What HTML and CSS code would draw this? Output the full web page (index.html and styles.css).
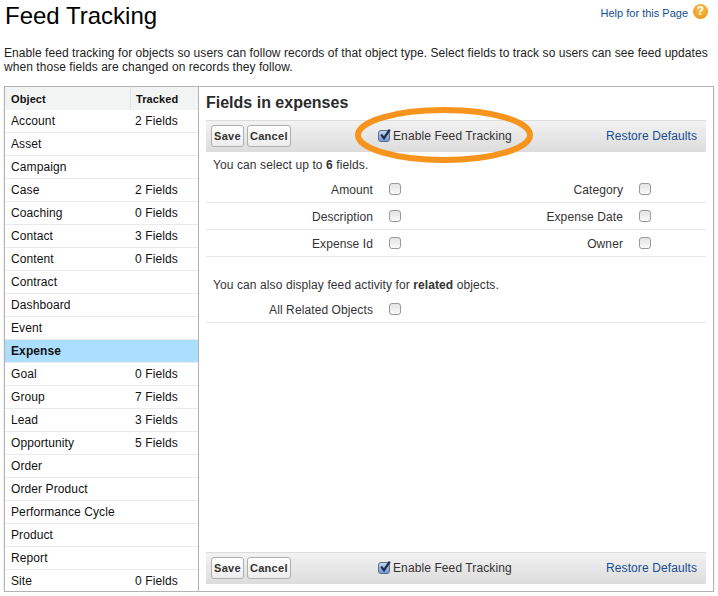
FILE: index.html
```html
<!DOCTYPE html>
<html lang="en">
<head>
    <meta charset="UTF-8">
    <title>Feed Tracking</title>
    <link rel="stylesheet" href="styles.css">
</head>
<body>
    <header class="page-head">
        <h1>Feed Tracking</h1>
        <div class="help">
            <a href="#">Help for this Page</a>
            <span class="help-icon">?</span>
        </div>
    </header>

    <p class="intro">Enable feed tracking for objects so users can follow records of that object type. Select fields to track so users can see feed updates when those fields are changed on records they follow.</p>

    <div class="setup">
        <div class="objects">
            <div class="row head"><span class="name">Object</span><span class="tracked">Tracked</span></div>
            <div class="row"><span class="name">Account</span><span class="tracked">2 Fields</span></div>
            <div class="row"><span class="name">Asset</span></div>
            <div class="row"><span class="name">Campaign</span></div>
            <div class="row"><span class="name">Case</span><span class="tracked">2 Fields</span></div>
            <div class="row"><span class="name">Coaching</span><span class="tracked">0 Fields</span></div>
            <div class="row"><span class="name">Contact</span><span class="tracked">3 Fields</span></div>
            <div class="row"><span class="name">Content</span><span class="tracked">0 Fields</span></div>
            <div class="row"><span class="name">Contract</span></div>
            <div class="row"><span class="name">Dashboard</span></div>
            <div class="row"><span class="name">Event</span></div>
            <div class="row selected"><span class="name">Expense</span></div>
            <div class="row"><span class="name">Goal</span><span class="tracked">0 Fields</span></div>
            <div class="row"><span class="name">Group</span><span class="tracked">7 Fields</span></div>
            <div class="row"><span class="name">Lead</span><span class="tracked">3 Fields</span></div>
            <div class="row"><span class="name">Opportunity</span><span class="tracked">5 Fields</span></div>
            <div class="row"><span class="name">Order</span></div>
            <div class="row"><span class="name">Order Product</span></div>
            <div class="row"><span class="name">Performance Cycle</span></div>
            <div class="row"><span class="name">Product</span></div>
            <div class="row"><span class="name">Report</span></div>
            <div class="row last"><span class="name">Site</span><span class="tracked">0 Fields</span></div>
        </div>

        <div class="panel">
            <h2>Fields in expenses</h2>

            <div class="toolbar">
                <div class="buttons"><button>Save</button><button>Cancel</button></div>
                <label class="enable">
                    <span class="box checked"><svg viewBox="0 0 14 14" width="14" height="14"><path d="M3.2 6.6 L6 10.2 L11.8 1.6" fill="none" stroke="#1c2a44" stroke-width="2.2"/></svg></span>
                    Enable Feed Tracking
                </label>
                <a class="restore" href="#">Restore Defaults</a>
            </div>

            <p class="note">You can select up to <b>6</b> fields.</p>
            <div class="fields">
                <div class="field"><span class="label">Amount</span><span class="box"></span></div>
                <div class="field"><span class="label">Category</span><span class="box"></span></div>
                <div class="field"><span class="label">Description</span><span class="box"></span></div>
                <div class="field"><span class="label">Expense Date</span><span class="box"></span></div>
                <div class="field"><span class="label">Expense Id</span><span class="box"></span></div>
                <div class="field"><span class="label">Owner</span><span class="box"></span></div>
            </div>

            <p class="note related-note">You can also display feed activity for <b>related</b> objects.</p>
            <div class="fields single">
                <div class="field"><span class="label">All Related Objects</span><span class="box"></span></div>
            </div>

            <div class="toolbar bottom">
                <div class="buttons"><button>Save</button><button>Cancel</button></div>
                <label class="enable">
                    <span class="box checked"><svg viewBox="0 0 14 14" width="14" height="14"><path d="M3.2 6.6 L6 10.2 L11.8 1.6" fill="none" stroke="#1c2a44" stroke-width="2.2"/></svg></span>
                    Enable Feed Tracking
                </label>
                <a class="restore" href="#">Restore Defaults</a>
            </div>

            <svg class="oval" width="184" height="58" viewBox="0 0 184 58"><ellipse cx="92" cy="29" rx="86" ry="25" fill="none" stroke="#f7941e" stroke-width="6"/></svg>
        </div>
    </div>
</body>
</html>
```

FILE: styles.css
```css
* {
    box-sizing: border-box;
}
body {
    font-family: "Liberation Sans", Arial, sans-serif;
    font-size: 12px;
    letter-spacing: 0.1px;
    margin: 0;
    padding: 0 4px;
    color: #222;
    background: white;
}
a {
    color: #15508f;
    text-decoration: none;
}
.page-head {
    display: flex;
    justify-content: space-between;
    height: 46px;
}
h1 {
    font-size: 24px;
    font-weight: normal;
    letter-spacing: 0;
    color: #000;
    margin: 0;
    padding-left: 1px;
    line-height: 32px;
}
.help {
    display: flex;
    align-items: flex-start;
    gap: 5px;
    font-size: 11px;
    letter-spacing: 0;
    padding: 4px 0 0;
    margin-right: 6px;
    line-height: 18px;
}
.help-icon {
    width: 15px;
    height: 15px;
    border-radius: 50%;
    background: radial-gradient(circle at 50% 35%, #fbc04f, #e88f0c);
    color: white;
    font-weight: bold;
    font-size: 12px;
    line-height: 15px;
    text-align: center;
}
.intro {
    margin: 0;
    height: 40px;
    line-height: 14px;
    font-size: 12px;
    letter-spacing: 0.06px;
}
.setup {
    display: flex;
    width: 710px;
    height: 506px;
    border: 1px solid #b3b3b3;
    box-shadow: 0 1px 2px rgba(0, 0, 0, 0.15);
}
.objects {
    width: 193px;
    flex: none;
    background: white;
}
.row {
    display: flex;
    height: 23px;
    line-height: 22px;
    border-bottom: 1px solid #eaeaea;
    color: #111;
}
.row .name {
    width: 128px;
    padding-left: 6px;
}
.row .tracked {
    padding-left: 2px;
}
.row.last {
    border-bottom: none;
}
.row.head {
    background: #f2f3f3;
    font-size: 11px;
    line-height: 24px;
    font-weight: bold;
    border-bottom: none;
}
.row.head .name {
    border-right: 1px solid #e4e6e6;
    width: 126px;
}
.row.head .tracked {
    padding-left: 5px;
}
.row.selected {
    background: #acdfff;
    font-weight: bold;
}
.panel {
    position: relative;
    flex: 1;
    display: flex;
    flex-direction: column;
    border-left: 1px solid #b3b3b3;
    padding: 0 7px;
}
h2 {
    font-size: 16px;
    letter-spacing: 0;
    color: #2b2b2b;
    margin: 0;
    height: 33px;
    line-height: 31px;
    font-weight: bold;
}
.toolbar {
    display: grid;
    grid-template-columns: 167px 1fr auto;
    align-items: center;
    height: 32px;
    padding: 0 9px 1px 5px;
    background: linear-gradient(#f2f2f2, #dcdcdc);
    border-top: 1px solid #dcdcdc;
    color: #333;
}
.toolbar.bottom {
    margin-top: auto;
    margin-bottom: 7px;
}
.buttons {
    display: flex;
    gap: 3px;
}
button {
    font-family: inherit;
    font-size: 11px;
    font-weight: bold;
    letter-spacing: 0.3px;
    color: #333;
    height: 22px;
    padding: 0 2px;
    background: linear-gradient(#fff, #ececec);
    border: 1px solid #b0b0b0;
    border-radius: 3px;
}
.enable {
    display: flex;
    align-items: center;
    gap: 3px;
}
.box {
    display: inline-block;
    position: relative;
    width: 12px;
    height: 12px;
    background: linear-gradient(#e2e2e2, #fafafa);
    border: 1px solid #9a9a9a;
    border-radius: 3px;
}
.box.checked {
    background: linear-gradient(#c3d4ee, #6f97d6);
    border-color: #5a6c8c;
}
.box svg {
    position: absolute;
    left: -1px;
    top: -3px;
}
.note {
    margin: 0;
    padding: 1px 0 0 7px;
    height: 24px;
    line-height: 24px;
    color: #333;
}
.fields {
    display: grid;
    grid-template-columns: 1fr 1fr;
}
.fields.single {
    grid-template-columns: 1fr;
}
.field {
    display: flex;
    height: 27px;
    align-items: center;
    border-bottom: 1px solid #e8e8e8;
    color: #333;
}
.field .label {
    width: 167px;
    text-align: right;
    margin-right: 16px;
    padding-top: 2px;
}
.related-note {
    margin-top: 15px;
}
.oval {
    position: absolute;
    left: 153px;
    top: 19px;
    pointer-events: none;
}
```
